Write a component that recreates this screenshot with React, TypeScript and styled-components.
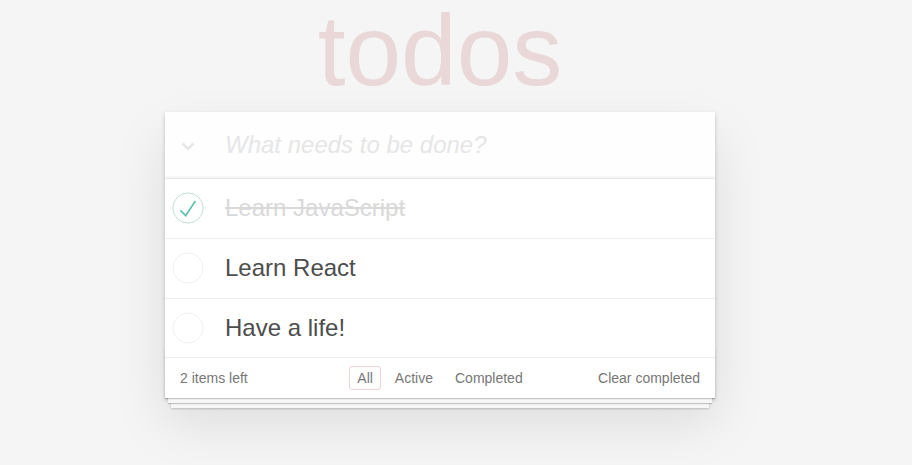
import { useState } from 'react'
import styled, { createGlobalStyle } from 'styled-components'

type Filter = 'All' | 'Active' | 'Completed'

interface Todo {
  id: number
  title: string
  completed: boolean
}

const GlobalStyle = createGlobalStyle`
  html, body {
    margin: 0;
    padding: 0;
  }
  body {
    background: #f5f5f5;
    font: 14px 'Liberation Sans', Arial, sans-serif;
    line-height: 1.4em;
    color: #4d4d4d;
    -webkit-font-smoothing: antialiased;
  }
`

const Page = styled.div`
  width: 550px;
  min-height: 100vh;
  margin: 0 0 0 165px;
  padding-bottom: 80px;
  box-sizing: border-box;
`

const Title = styled.h1`
  margin: 0 0 12px;
  font-size: 100px;
  line-height: 100px;
  font-weight: 100;
  text-align: center;
  color: rgba(175, 47, 47, 0.15);
  text-rendering: optimizeLegibility;
`

const TodoApp = styled.section`
  background: #fff;
  position: relative;
  box-shadow: 0 2px 4px 0 rgba(0, 0, 0, 0.2), 0 25px 50px 0 rgba(0, 0, 0, 0.1);
`

const Header = styled.header`
  display: flex;
  align-items: center;
  background: rgba(0, 0, 0, 0.003);
  box-shadow: inset 0 -2px 1px rgba(0, 0, 0, 0.03);
`

const ToggleAll = styled.button`
  width: 46px;
  height: 66px;
  padding: 3px 0 0;
  border: none;
  background: none;
  display: flex;
  align-items: center;
  justify-content: center;
  cursor: pointer;
`

const NewTodo = styled.input`
  flex: 1;
  min-width: 0;
  padding: 16px 16px 16px 14px;
  border: none;
  outline: none;
  background: transparent;
  font-family: inherit;
  font-size: 24px;
  line-height: 1.4em;
  color: inherit;
  &::placeholder {
    font-style: italic;
    color: #e6e6e6;
  }
`

const List = styled.ul`
  margin: 0;
  padding: 0;
  list-style: none;
  border-top: 1px solid #e6e6e6;
`

const Item = styled.li`
  display: flex;
  align-items: center;
  font-size: 24px;
  border-bottom: 1px solid #ededed;
`

const Toggle = styled.button`
  width: 46px;
  height: 58.8px;
  padding: 0;
  border: none;
  background: none;
  display: flex;
  align-items: center;
  justify-content: center;
  cursor: pointer;
`

const ItemLabel = styled.label<{ $done: boolean }>`
  flex: 1;
  padding: 15px 15px 15px 14px;
  line-height: 1.2;
  word-break: break-all;
  color: ${(p) => (p.$done ? '#d9d9d9' : '#4d4d4d')};
  text-decoration: ${(p) => (p.$done ? 'line-through' : 'none')};
  transition: color 0.4s;
`

const Footer = styled.footer`
  position: relative;
  display: grid;
  grid-template-columns: 1fr auto 1fr;
  align-items: center;
  height: 20px;
  padding: 10px 15px;
  color: #777;

  &::before {
    content: '';
    position: absolute;
    right: 0;
    bottom: 0;
    left: 0;
    height: 50px;
    overflow: hidden;
    pointer-events: none;
    box-shadow: 0 1px 1px rgba(0, 0, 0, 0.2), 0 8px 0 -3px #f6f6f6, 0 9px 1px -3px rgba(0, 0, 0, 0.2),
      0 16px 0 -6px #f6f6f6, 0 17px 2px -6px rgba(0, 0, 0, 0.2);
  }
`

const Count = styled.span`
  position: relative;
  line-height: 20px;
`

const Filters = styled.ul`
  position: relative;
  display: flex;
  margin: 0;
  padding: 0;
  list-style: none;
`

const FilterLink = styled.a<{ $selected: boolean }>`
  margin: 3px;
  padding: 3px 7px;
  line-height: 16px;
  color: inherit;
  text-decoration: none;
  border: 1px solid ${(p) => (p.$selected ? 'rgba(175, 47, 47, 0.2)' : 'transparent')};
  border-radius: 3px;
  cursor: pointer;
  &:hover {
    border-color: rgba(175, 47, 47, ${(p) => (p.$selected ? 0.2 : 0.1)});
  }
`

const ClearButton = styled.button`
  position: relative;
  justify-self: end;
  padding: 0;
  border: none;
  background: none;
  font: inherit;
  line-height: 20px;
  color: inherit;
  cursor: pointer;
  &:hover {
    text-decoration: underline;
  }
`

const Chevron = () => (
  <svg width="14" height="9" viewBox="0 0 14 9">
    <polyline points="1.5,1.5 7,7 12.5,1.5" fill="none" stroke="#e6e6e6" strokeWidth="2.6" />
  </svg>
)

const CheckCircle = ({ done }: { done: boolean }) => (
  <svg width="32" height="32" viewBox="-3 -3 106 106">
    <circle cx="50" cy="50" r="50" fill="none" stroke={done ? '#bddad5' : '#ededed'} strokeWidth="3" />
    {done && <path fill="#5dc2af" d="M72 25L42 71 27 56l-4 4 20 20 34-52z" />}
  </svg>
)

const initialTodos: Todo[] = [
  { id: 1, title: 'Learn JavaScript', completed: true },
  { id: 2, title: 'Learn React', completed: false },
  { id: 3, title: 'Have a life!', completed: false },
]

const App = () => {
  const [todos, setTodos] = useState<Todo[]>(initialTodos)
  const [filter, setFilter] = useState<Filter>('All')
  const [text, setText] = useState('')

  const toggle = (id: number) =>
    setTodos((list) => list.map((t) => (t.id === id ? { ...t, completed: !t.completed } : t)))

  const toggleAll = () => {
    const allDone = todos.every((t) => t.completed)
    setTodos((list) => list.map((t) => ({ ...t, completed: !allDone })))
  }

  const addTodo = (e: React.KeyboardEvent<HTMLInputElement>) => {
    if (e.key !== 'Enter' || !text.trim()) return
    setTodos((list) => [...list, { id: Date.now(), title: text.trim(), completed: false }])
    setText('')
  }

  const visible = todos.filter((t) =>
    filter === 'Active' ? !t.completed : filter === 'Completed' ? t.completed : true
  )
  const left = todos.filter((t) => !t.completed).length

  return (
    <>
      <GlobalStyle />
      <Page>
        <Title>todos</Title>
        <TodoApp>
          <Header>
            <ToggleAll onClick={toggleAll} aria-label="Mark all as complete">
              <Chevron />
            </ToggleAll>
            <NewTodo
              placeholder="What needs to be done?"
              value={text}
              onChange={(e) => setText(e.target.value)}
              onKeyDown={addTodo}
            />
          </Header>
          <List>
            {visible.map((todo) => (
              <Item key={todo.id}>
                <Toggle onClick={() => toggle(todo.id)} aria-label="Toggle">
                  <CheckCircle done={todo.completed} />
                </Toggle>
                <ItemLabel $done={todo.completed}>{todo.title}</ItemLabel>
              </Item>
            ))}
          </List>
          <Footer>
            <Count>
              {left} {left === 1 ? 'item' : 'items'} left
            </Count>
            <Filters>
              {(['All', 'Active', 'Completed'] as Filter[]).map((f) => (
                <li key={f}>
                  <FilterLink $selected={filter === f} onClick={() => setFilter(f)}>
                    {f}
                  </FilterLink>
                </li>
              ))}
            </Filters>
            <ClearButton onClick={() => setTodos((list) => list.filter((t) => !t.completed))}>
              Clear completed
            </ClearButton>
          </Footer>
        </TodoApp>
      </Page>
    </>
  )
}

export default App
